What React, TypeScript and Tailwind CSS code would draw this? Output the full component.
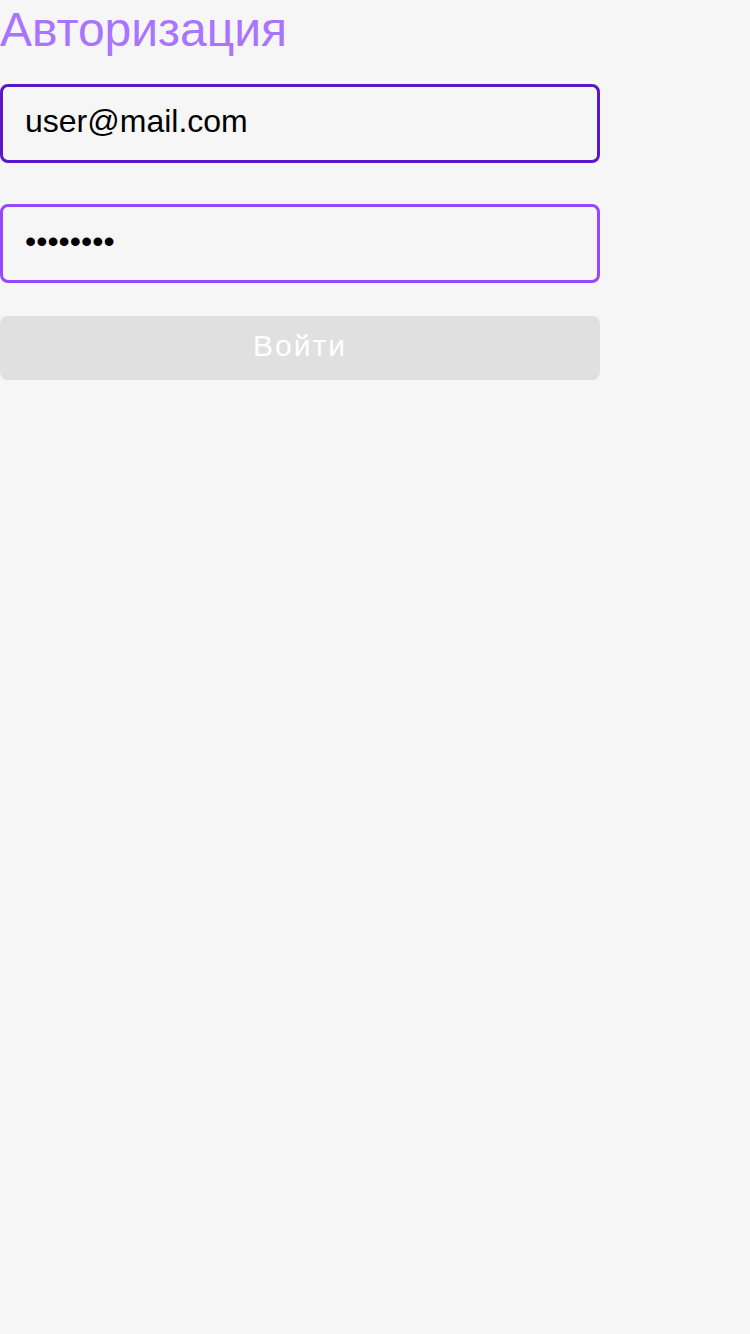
import { useState } from "react";

export default function App() {
  const [email, setEmail] = useState("user@mail.com");
  const [password, setPassword] = useState("password");

  return (
    <div className="min-h-[1334px] w-full bg-[#f6f6f6] font-['Liberation_Sans',Arial,sans-serif]">
      <form className="flex w-[600px] flex-col" onSubmit={(e) => e.preventDefault()}>
        <h1 className="text-[48px] leading-[60px] font-normal text-[#a974ff]">Авторизация</h1>

        <input
          type="email"
          value={email}
          onChange={(e) => setEmail(e.target.value)}
          className="mt-6 h-[79px] w-full rounded-lg border-[3px] border-[#5a16c9] bg-transparent px-[22px] pb-1 text-[32px] text-black outline-none"
        />

        <input
          type="password"
          value={password}
          onChange={(e) => setPassword(e.target.value)}
          className="mt-[41px] h-[79px] w-full rounded-lg border-[3px] border-[#9747ff] bg-transparent px-[22px] pb-1 text-[32px] text-black outline-none"
        />

        <button
          type="submit"
          disabled
          className="mt-[33px] h-16 w-full rounded-lg bg-[#e0e0e0] pb-[6px] text-[30px] tracking-[2px] text-white"
        >
          Войти
        </button>
      </form>
    </div>
  );
}
